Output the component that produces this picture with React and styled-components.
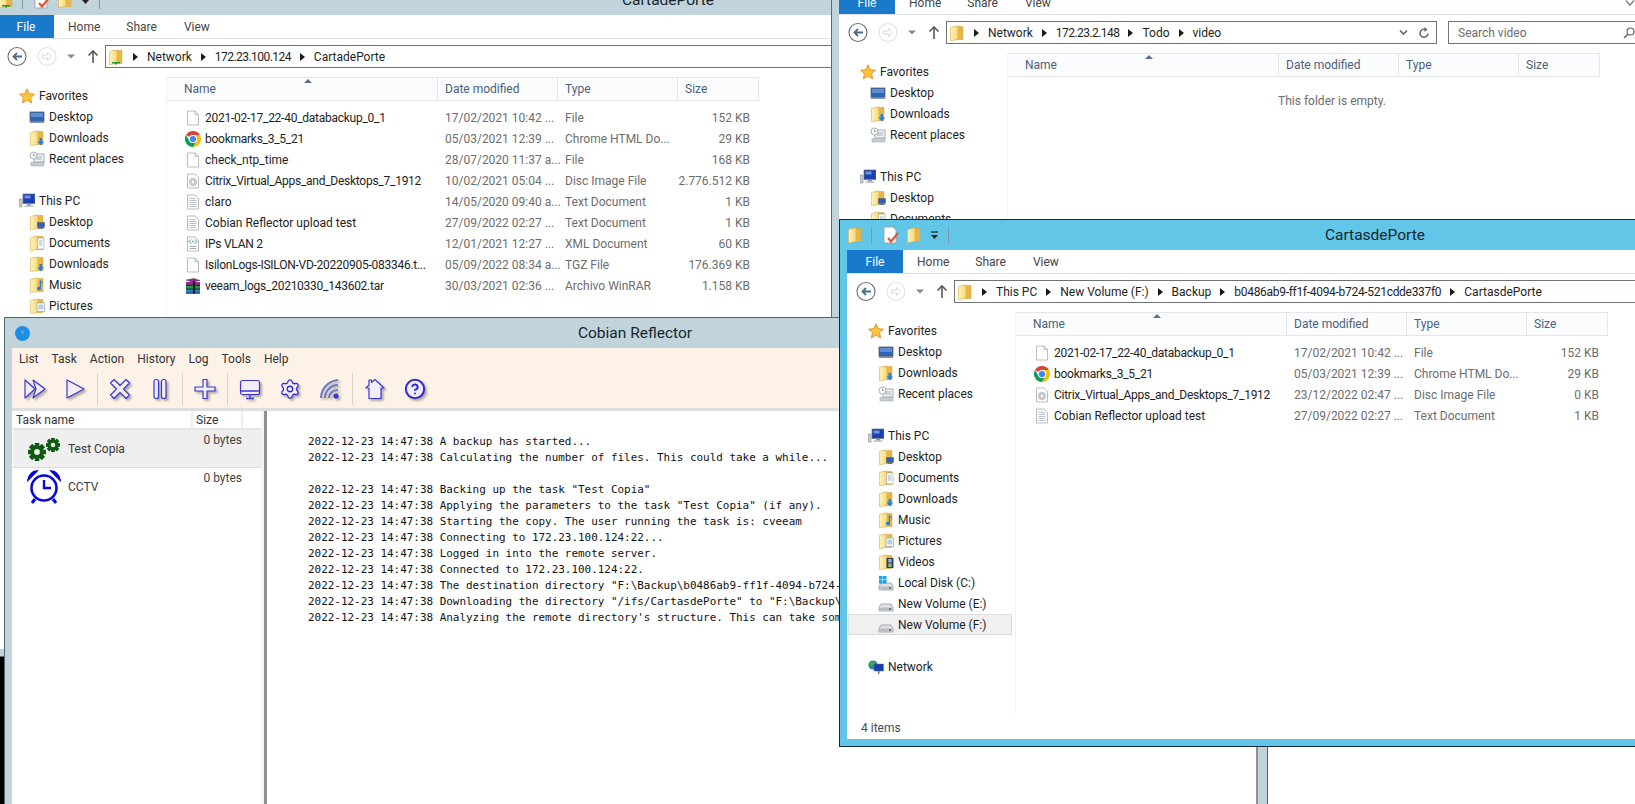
import React from "react"
import styled, { createGlobalStyle } from "styled-components"
import { Settings, CircleHelp } from "lucide-react"

const UI = `Roboto, "Liberation Sans", sans-serif`

const Global = createGlobalStyle`
  html, body { margin: 0; padding: 0; background: #000; }
  body { font-family: ${UI}; font-size: 12px; }
`

const Screen = styled.div`
  position: relative;
  width: 1635px;
  height: 804px;
  overflow: hidden;
  background: #000;
`

/* ---------- explorer window ---------- */

const Win = styled.section`
  position: absolute;
  left: ${p => p.$left}px;
  top: ${p => p.$top}px;
  width: ${p => p.$width}px;
  height: ${p => p.$height}px;
  z-index: ${p => p.$z};
  box-sizing: border-box;
  display: flex;
  flex-direction: column;
  border: 1px solid ${p => (p.$active ? "#16233a" : "#5c6b75")};
  background: ${p => (p.$active ? "#62c6e8" : "#c1d4dc")};
  padding: 0 7px 7px;
`

const TitleBar = styled.header`
  flex: none;
  height: 30px;
  display: grid;
  grid-template-columns: 1fr auto 1fr;
  align-items: center;
`

const Title = styled.h1`
  margin: 0;
  font-size: 15.5px;
  font-weight: 400;
  color: #16262f;
`

const Quick = styled.div`
  display: flex;
  align-items: center;
  height: 100%;
`

const QuickSep = styled.span`
  width: 1px;
  height: 17px;
  background: #7d9aa8;
  margin: ${p => p.$margin};
`

const QuickGap = styled.span`
  width: ${p => p.$w}px;
`

const Body = styled.div`
  flex: 1;
  min-height: 0;
  background: #fff;
  display: flex;
  flex-direction: column;
`

const Tabs = styled.nav`
  flex: none;
  height: 23px;
  display: flex;
  align-items: center;
  border-bottom: 1px solid #dfe2e5;
`

const FileTab = styled.span`
  width: 56px;
  height: 100%;
  display: flex;
  align-items: center;
  justify-content: center;
  background: #1979ca;
  color: #fff;
`

const Tab = styled.span`
  color: #444;
  margin-left: ${p => p.$gap}px;
`

const HelpChevron = styled.svg`
  margin-left: auto;
  margin-right: 15px;
`

const AddressRow = styled.div`
  flex: none;
  height: 38px;
  display: flex;
  align-items: flex-start;
  padding: 6px 5px 0 9px;
  box-sizing: border-box;
`

const NavBtn = styled.svg`
  flex: none;
  height: 23px;
  margin-left: ${p => p.$gap || 0}px;
`

const Address = styled.div`
  flex: 1;
  min-width: 0;
  height: 23px;
  box-sizing: border-box;
  margin-left: 6px;
  border: 1px solid #6f7275;
  display: flex;
  align-items: center;
  padding: 0 4px 0 2px;
  color: #1e1e1e;
  white-space: nowrap;
`

const Crumb = styled.span`
  display: flex;
  align-items: center;
  letter-spacing: ${p => p.$tight}px;
`

const CrumbArrow = styled.i`
  width: 0;
  height: 0;
  margin: 0 9px;
  border-style: solid;
  border-width: 4px 0 4px 5px;
  border-color: transparent transparent transparent #1a1a1a;
`

const AddressTools = styled.span`
  margin-left: auto;
  display: flex;
  align-items: center;
  gap: 10px;
  padding-right: 2px;
`

const Search = styled.div`
  flex: none;
  width: 197px;
  height: 23px;
  box-sizing: border-box;
  margin-left: 11px;
  border: 1px solid #6f7275;
  padding: 0 9px;
  display: flex;
  align-items: center;
  justify-content: space-between;
  color: #6d6d6d;
`

const Main = styled.div`
  flex: 1;
  min-height: 0;
  display: flex;
`

const Side = styled.aside`
  flex: none;
  width: 169px;
  box-sizing: border-box;
  padding-top: 8px;
  border-right: 1px solid #f3f3f3;
`

const SideRow = styled.div`
  height: 21px;
  box-sizing: border-box;
  display: flex;
  align-items: center;
  gap: 4px;
  color: #1e1e1e;
  margin: 0 3px 0 1px;
  padding-left: ${p => (p.$sub ? 30 : 20)}px;
  background: ${p => (p.$selected ? "#f0f0f0" : "transparent")};
  outline: ${p => (p.$selected ? "1px solid #dcdcdc" : "none")};
  outline-offset: -1px;
`

const SideGap = styled.div`
  height: 21px;
`

const Files = styled.div`
  flex: 1;
  min-width: 0;
`

const COLS = "271px 120px 120px 81px"

const HeaderRow = styled.div`
  width: 592px;
  height: 24px;
  box-sizing: border-box;
  display: grid;
  grid-template-columns: ${COLS};
  background: #fbfcfd;
  border: solid #e4e7ea;
  border-width: 1px 1px 1px 0;
  color: #4c607a;
`

const HeaderCell = styled.div`
  position: relative;
  display: flex;
  align-items: center;
  padding-left: ${p => (p.$first ? 17 : 7)}px;
  border-right: ${p => (p.$last ? "none" : "1px solid #e4e7ea")};

  &::before {
    content: "";
    display: ${p => (p.$first ? "block" : "none")};
    position: absolute;
    top: 1px;
    left: 137px;
    border-style: solid;
    border-width: 0 4px 4px;
    border-color: transparent transparent #5d7288;
  }
`

const FileList = styled.div`
  padding-top: 6px;
`

const FileRow = styled.div`
  width: 592px;
  height: 21px;
  display: grid;
  grid-template-columns: ${COLS};
  align-items: center;
  color: #6d6d6d;
`

const FileName = styled.div`
  display: flex;
  align-items: center;
  gap: 4px;
  padding-left: 18px;
  color: #1e1e1e;
  white-space: nowrap;
  letter-spacing: ${p => (p.$digits ? "-0.26px" : "0")};
`

const FileCell = styled.div`
  padding-left: 7px;
  white-space: nowrap;
`

const FileSize = styled.div`
  text-align: right;
  padding-right: 9px;
  white-space: nowrap;
`

const Empty = styled.p`
  margin: 0;
  padding: 16px 0 0 6px;
  text-align: center;
  color: #6d6d6d;
  line-height: 16px;
`

const Status = styled.footer`
  flex: none;
  height: 26px;
  box-sizing: border-box;
  display: flex;
  align-items: center;
  padding: 4px 0 0 14px;
  color: #3d4d63;
`

/* ---------- cobian window ---------- */

const CobianWin = styled.section`
  position: absolute;
  left: 4px;
  top: 317px;
  width: 1264px;
  height: 600px;
  z-index: 3;
  box-sizing: border-box;
  display: flex;
  flex-direction: column;
  border: 1px solid #55636b;
  background: #c1d4dc;
  padding: 0 9px 7px 7px;
`

const CobianDisc = styled.span`
  width: 15px;
  height: 15px;
  margin-left: 3px;
  border-radius: 50%;
  background: radial-gradient(circle at 50% 40%, #7f9fb8 0 1.2px, #1b8fe6 2px);
`

const MenuArea = styled.div`
  flex: none;
  background: #fcf2e7;
`

const Menu = styled.nav`
  height: 21px;
  display: flex;
  align-items: center;
  gap: 13px;
  padding-left: 7px;
  color: #333;
`

const Toolbar = styled.div`
  height: 39px;
  display: flex;
  align-items: center;
  padding-left: 3px;
`

const ToolBtn = styled.span`
  width: 40px;
  display: flex;
  justify-content: center;

  svg {
    filter: drop-shadow(2px 2px 1px rgba(70, 60, 60, 0.4));
  }
`

const ToolSep = styled.span`
  width: 1px;
  height: 32px;
  margin: 0 2px;
  background: #d9d2ca;
`

const Panes = styled.div`
  flex: 1;
  min-height: 0;
  display: flex;
  background: #fff;
  border-top: 3px solid #dedede;
`

const TaskPane = styled.div`
  flex: none;
  width: 248px;
  margin-left: 1px;
`

const TASK_COLS = "180px 50px 18px"

const TaskHeader = styled.div`
  height: 17px;
  display: grid;
  grid-template-columns: ${TASK_COLS};
  border-bottom: 2px solid #e4e4e4;
  color: #333;
`

const TaskHeadCell = styled.div`
  display: flex;
  align-items: center;
  padding-left: 3px;
  border-right: 2px solid #eeeeee;
`

const TaskRow = styled.div`
  height: 38px;
  box-sizing: border-box;
  display: grid;
  grid-template-columns: ${TASK_COLS};
  background: ${p => (p.$selected ? "#efefef" : "#fff")};
  border-bottom: ${p => (p.$selected ? "1px solid #dcdcdc" : "none")};
`

const TaskName = styled.div`
  display: flex;
  align-items: center;
  gap: 7px;
  padding-left: 14px;
  color: #3a3a3a;
`

const TaskSize = styled.div`
  padding-top: 2px;
  line-height: 16px;
  text-align: right;
  padding-right: 1px;
  color: #444;
  white-space: nowrap;
`

const Splitter = styled.div`
  flex: none;
  width: 3px;
  background: #f4f4f4;
`

const LogPane = styled.pre`
  flex: 1;
  min-width: 0;
  margin: 0;
  overflow: hidden;
  border-left: 3px solid #8e9296;
  border-right: 2px solid #8e9296;
  padding: 23px 0 0 41px;
  font-family: "DejaVu Sans Mono", "Liberation Mono", monospace;
  font-size: 10.95px;
  line-height: 16px;
  color: #111;
  background: #fff;
`

/* ---------- icons ---------- */

const Svg = ({ children, w = 16, h = 16, ...rest }) => (
  <svg width={w} height={h} viewBox={`0 0 ${w} ${h}`} style={{ flex: "none" }} {...rest}>{children}</svg>
)

const FolderShape = () => (
  <>
    <defs>
      <linearGradient id="folderFace" x1="0" x2="1" y1="0" y2="0">
        <stop offset="0" stopColor="#fff4bd" />
        <stop offset="1" stopColor="#f6d777" />
      </linearGradient>
    </defs>
    <path d="M5 1.5h9v13H5z" fill="#e6b646" stroke="#cfa03a" strokeWidth=".5" />
    <path d="M1.5 2.5 9 .8v13.6L1.5 15.8z" fill="url(#folderFace)" stroke="#d8b04c" strokeWidth=".6" />
  </>
)

const Overlays = {
  down: <path d="M10.5 8h2.6v3.5h2L11.8 15.5 8.5 11.5h2z" fill="#2a7fd6" />,
  desktop: (
    <>
      <rect x="8.5" y="8.5" width="7" height="5" fill="#2f62b8" stroke="#555" strokeWidth=".5" />
      <rect x="9.5" y="14" width="5" height="1" fill="#777" />
    </>
  ),
  doc: (
    <>
      <rect x="8.5" y="3" width="6.5" height="11" fill="#fff" stroke="#9a9a9a" strokeWidth=".6" />
      <path d="M10 6h3.5M10 8h3.5M10 10h3.5" stroke="#7a8aa0" strokeWidth=".7" />
    </>
  ),
  music: <path d="M12 4v7.5a2 1.8 0 1 1-1.2-1.6V3c2 1 3.5 2.6 3.7 5-.7-1.6-1.4-2.2-2.5-2.7z" fill="#2a7fd6" />,
  pic: (
    <>
      <rect x="8" y="5" width="7.5" height="8.5" fill="#fff" stroke="#8fa4b4" strokeWidth=".7" />
      <rect x="9.3" y="6.5" width="5" height="5" fill="#b9d0e2" />
    </>
  ),
  video: (
    <>
      <rect x="8.5" y="4" width="7" height="10" fill="#33404c" />
      <rect x="10.3" y="5" width="3.4" height="3.5" fill="#8fb7d8" />
      <rect x="10.3" y="9.5" width="3.4" height="3.5" fill="#7fbf8f" />
    </>
  ),
  net: <path d="M4 13h8v1.5H9v1H7v-1H4z" fill="#1f9d3a" />,
}

const Folder = ({ over }) => (
  <Svg>
    <FolderShape />
    {over && Overlays[over]}
  </Svg>
)

const MonitorIcon = () => (
  <Svg>
    <rect x="1" y="3" width="14" height="9.5" fill="#2e63b6" stroke="#5a6470" strokeWidth=".8" />
    <rect x="2" y="4" width="12" height="4" fill="#5e8fd2" />
    <rect x="1" y="12.5" width="14" height="1.5" fill="#8d949c" />
  </Svg>
)

const RecentIcon = () => (
  <Svg>
    <rect x="5" y="3" width="10" height="8" fill="#eef2f5" stroke="#8c99a3" strokeWidth=".8" />
    <circle cx="4.5" cy="4.5" r="3.5" fill="#fff" stroke="#8c99a3" strokeWidth=".8" />
    <path d="M4.5 2.5v2h1.6" stroke="#667" strokeWidth=".7" fill="none" />
    <path d="M7 6h6M7 8h6" stroke="#94a3ae" strokeWidth=".8" />
    <rect x="2" y="11.5" width="13" height="3.5" fill="#c6ccd1" stroke="#9aa2a9" strokeWidth=".5" />
  </Svg>
)

const PcIcon = () => (
  <Svg>
    <rect x="0.5" y="6" width="2.5" height="8" fill="#c9ced3" stroke="#7b8288" strokeWidth=".5" />
    <rect x="4" y="1" width="12" height="9.5" fill="#1a3fb4" stroke="#6d747b" strokeWidth=".7" />
    <rect x="5.5" y="2.5" width="6" height="3" fill="#6f93e0" />
    <rect x="8" y="10.5" width="4" height="2" fill="#8d949c" />
    <rect x="5.5" y="12.5" width="9" height="1.2" fill="#a9afb5" />
  </Svg>
)

const StarIcon = () => (
  <Svg>
    <path d="M8 .8l2.2 4.8 5.3.6-3.9 3.6 1.1 5.2L8 12.3 3.3 15l1.1-5.2L.5 6.2l5.3-.6z" fill="#f7c23c" stroke="#e08a26" strokeWidth=".8" />
  </Svg>
)

const DiskShape = () => (
  <>
    <path d="M1 11.5 3 8h10l2 3.5V15H1z" fill="#dfe2e5" stroke="#8a8f95" strokeWidth=".7" />
    <rect x="1.5" y="11.5" width="13" height="3" fill="#b9bec3" />
    <rect x="11" y="12.3" width="2" height="1.4" fill="#555" />
  </>
)

const DiskIcon = () => (
  <Svg>
    <DiskShape />
  </Svg>
)

const SysDiskIcon = () => (
  <Svg>
    <DiskShape />
    <path d="M1 1h3.5v3.5H1zM5 1h3.5v3.5H5zM1 5h3.5v3.5H1zM5 5h3.5v3.5H5z" fill="#19a5e6" />
  </Svg>
)

const NetIcon = () => (
  <Svg>
    <circle cx="5" cy="6" r="4.6" fill="#1f8f8f" />
    <path d="M2 4c2-1 4-1 5 0-1 2-3 3-5 2z" fill="#47b04b" />
    <rect x="6" y="5" width="9.5" height="7" fill="#1a3fb4" stroke="#666" strokeWidth=".5" />
    <rect x="10" y="12" width="1.5" height="3" fill="#777" />
  </Svg>
)

const PagePath = "M2.5 1h7.5l3.5 3.5V15h-11z"

const FileIcon = () => (
  <Svg>
    <path d={PagePath} fill="#fff" stroke="#a9a9a9" strokeWidth=".8" />
    <path d="M10 1v3.5h3.5" fill="none" stroke="#a9a9a9" strokeWidth=".8" />
  </Svg>
)

const TextIcon = () => (
  <Svg>
    <path d={PagePath} fill="#fff" stroke="#a9a9a9" strokeWidth=".8" />
    <path d="M4.5 4.5h6M4.5 6.5h7M4.5 8.5h7M4.5 10.5h7M4.5 12.5h7" stroke="#a8b4c2" strokeWidth=".8" />
  </Svg>
)

const DiscIcon = () => (
  <Svg>
    <path d={PagePath} fill="#fff" stroke="#a9a9a9" strokeWidth=".8" />
    <circle cx="8" cy="9" r="4.2" fill="#c7c9cc" />
    <circle cx="8" cy="9" r="1.2" fill="#fff" />
  </Svg>
)

const XmlIcon = () => (
  <Svg>
    <path d={PagePath} fill="#fff" stroke="#a9a9a9" strokeWidth=".8" />
    <path d="M6 3.5 4 5.5l2 2M10 3.5l2 2-2 2" fill="none" stroke="#2c8a5c" strokeWidth="1" />
    <circle cx="8" cy="5.5" r="1" fill="#49a3d8" />
    <path d="M4.5 10.5h7M4.5 12.5h7" stroke="#8a94a0" strokeWidth=".8" />
  </Svg>
)

const ChromeIcon = () => (
  <Svg>
    <path d="M1.07 4A8 8 0 0 1 14.93 4H8a4 4 0 0 0-3.46 2z" fill="#db4437" />
    <path d="M14.93 4A8 8 0 0 1 8 16l3.46-6A4 4 0 0 0 8 4z" fill="#f4c20d" />
    <path d="M8 16A8 8 0 0 1 1.07 4l3.47 6a4 4 0 0 0 6.92 0z" fill="#0f9d58" />
    <circle cx="8" cy="8" r="4" fill="#fff" />
    <circle cx="8" cy="8" r="3.1" fill="#4285f4" />
  </Svg>
)

const RarIcon = () => (
  <Svg>
    <path d="M1 2 9 .5l6 2-8 1.5z" fill="#8e2c8e" stroke="#222" strokeWidth=".4" />
    <rect x="1" y="4" width="14" height="3.4" fill="#8e2c8e" />
    <rect x="1" y="7.5" width="14" height="3.6" fill="#1f9c4a" />
    <rect x="1" y="11.2" width="14" height="3.8" fill="#2b7fc4" />
    <path d="M1 7.4h14M1 11.1h14M1 15.2h14" stroke="#111" strokeWidth=".9" />
    <rect x="8" y="3" width="2" height="12.5" fill="#1c1c1c" />
  </Svg>
)

const CheckDoc = () => (
  <Svg w={18} h={18}>
    <path d="M2 1h9l3 3v13H2z" fill="#fff" stroke="#9a9a9a" strokeWidth=".8" />
    <path d="M6 12l3 3.5L16 7" fill="none" stroke="#e2543a" strokeWidth="2.2" />
  </Svg>
)

const DownMini = () => (
  <Svg w={9} h={9}>
    <path d="M1 1h7" stroke="#222" strokeWidth="1.2" />
    <path d="M1 4h7L4.5 8z" fill="#222" />
  </Svg>
)

const BackBtn = ({ dim, gap }) => (
  <NavBtn width="20" height="23" viewBox="0 0 20 23" $gap={gap}>
    <circle cx="10" cy="11.5" r="9" fill="#fff" stroke={dim ? "#e0e0e0" : "#6a6a6a"} strokeWidth="1.1" />
    {dim
      ? <path d="M5.5 10h5V7.5l4 4-4 4V13h-5z" fill="none" stroke="#dadada" />
      : <path d="M15 11.5H6.5M10 8l-3.5 3.5L10 15" fill="none" stroke="#4d6a86" strokeWidth="1.8" />}
  </NavBtn>
)

const GearDots = ({ cx, cy, r, fill }) => (
  <g fill={fill}>
    {[0, 45, 90, 135, 180, 225, 270, 315].map(a => (
      <rect key={a} x={cx - r * 0.24} y={cy - r} width={r * 0.48} height={r * 2} transform={`rotate(${a} ${cx} ${cy})`} />
    ))}
    <circle cx={cx} cy={cy} r={r * 0.74} />
    <circle cx={cx} cy={cy} r={r * 0.32} fill="#efefef" />
  </g>
)

const GearsIcon = () => (
  <Svg w={34} h={24}>
    <GearDots cx={10} cy={15} r={9} fill="#0e5b12" />
    <GearDots cx={26} cy={8} r={7} fill="#0e5b12" />
  </Svg>
)

const ClockIcon = () => (
  <Svg w={34} h={34}>
    <circle cx="17" cy="18" r="12.5" fill="#fff" stroke="#0808dc" strokeWidth="2.6" />
    <path d="M17 10v8h7" fill="none" stroke="#0808dc" strokeWidth="2.4" />
    <path d="M1 10C2 4 6 1 10 1L1 10zM33 10C32 4 28 1 24 1l9 9z" fill="#0808dc" stroke="#0808dc" strokeWidth="1.6" />
    <path d="M8 29l-3 4M26 29l3 4" stroke="#0808dc" strokeWidth="3" />
  </Svg>
)

const ink = { stroke: "#3c38d2", strokeWidth: 1.2, fill: "#f4eefa", strokeLinejoin: "round" }

const Tool = ({ children }) => (
  <ToolBtn>
    <svg width="24" height="24" viewBox="0 0 24 24">{children}</svg>
  </ToolBtn>
)

const LucideTool = ({ as: Icon, weight = 1.4 }) => (
  <ToolBtn>
    <Icon size={22} color="#2f2bd0" strokeWidth={weight} fill="#f4eefa" />
  </ToolBtn>
)

/* ---------- data ---------- */

const favorites = [
  ["Desktop", <MonitorIcon />],
  ["Downloads", <Folder over="down" />],
  ["Recent places", <RecentIcon />],
]

const libraries = [
  ["Desktop", <Folder over="desktop" />],
  ["Documents", <Folder over="doc" />],
  ["Downloads", <Folder over="down" />],
  ["Music", <Folder over="music" />],
  ["Pictures", <Folder over="pic" />],
  ["Videos", <Folder over="video" />],
  ["Local Disk (C:)", <SysDiskIcon />],
  ["New Volume (E:)", <DiskIcon />],
  ["New Volume (F:)", <DiskIcon />],
]

const networkFiles = [
  ["2021-02-17_22-40_databackup_0_1", <FileIcon />, "17/02/2021 10:42 ...", "File", "152 KB"],
  ["bookmarks_3_5_21", <ChromeIcon />, "05/03/2021 12:39 ...", "Chrome HTML Do...", "29 KB"],
  ["check_ntp_time", <FileIcon />, "28/07/2020 11:37 a...", "File", "168 KB"],
  ["Citrix_Virtual_Apps_and_Desktops_7_1912", <DiscIcon />, "10/02/2021 05:04 ...", "Disc Image File", "2.776.512 KB"],
  ["claro", <TextIcon />, "14/05/2020 09:40 a...", "Text Document", "1 KB"],
  ["Cobian Reflector upload test", <TextIcon />, "27/09/2022 02:27 ...", "Text Document", "1 KB"],
  ["IPs VLAN 2", <XmlIcon />, "12/01/2021 12:27 ...", "XML Document", "60 KB"],
  ["IsilonLogs-ISILON-VD-20220905-083346.t...", <FileIcon />, "05/09/2022 08:34 a...", "TGZ File", "176.369 KB"],
  ["veeam_logs_20210330_143602.tar", <RarIcon />, "30/03/2021 02:36 ...", "Archivo WinRAR", "1.158 KB"],
]

const localFiles = [
  ["2021-02-17_22-40_databackup_0_1", <FileIcon />, "17/02/2021 10:42 ...", "File", "152 KB"],
  ["bookmarks_3_5_21", <ChromeIcon />, "05/03/2021 12:39 ...", "Chrome HTML Do...", "29 KB"],
  ["Citrix_Virtual_Apps_and_Desktops_7_1912", <DiscIcon />, "23/12/2022 02:47 ...", "Disc Image File", "0 KB"],
  ["Cobian Reflector upload test", <TextIcon />, "27/09/2022 02:27 ...", "Text Document", "1 KB"],
]

const stamp = "2022-12-23 14:47:38 "
const logLines = [
  "A backup has started...",
  "Calculating the number of files. This could take a while...",
  null,
  'Backing up the task "Test Copia"',
  'Applying the parameters to the task "Test Copia" (if any).',
  "Starting the copy. The user running the task is: cveeam",
  "Connecting to 172.23.100.124:22...",
  "Logged in into the remote server.",
  "Connected to 172.23.100.124:22.",
  'The destination directory "F:\\Backup\\b0486ab9-ff1f-4094-b724-521cdde337f0\\CartasdePorte" has been created.',
  'Downloading the directory "/ifs/CartasdePorte" to "F:\\Backup\\b0486ab9-ff1f-4094-b724-521cdde337f0\\CartasdePorte"',
  "Analyzing the remote directory's structure. This can take some time.",
]

// ip addresses and guids run wider in Roboto than in the original font
const crumbTight = c => (/^[\d.]+$/.test(c) ? -0.55 : /\d/.test(c) ? -0.3 : 0)

/* ---------- pieces ---------- */

const Explorer = ({ title, crumbs, shared, active, files, statusText, selected, searchIn, ...place }) => (
  <Win {...place} $active={active}>
    <TitleBar>
      <Quick>
        <Folder over={shared ? "net" : undefined} />
        <QuickSep $margin="0 10px 0 8px" />
        <CheckDoc />
        <QuickGap $w={6} />
        <Folder />
        <QuickGap $w={8} />
        <DownMini />
        <QuickSep $margin="0 0 0 9px" />
      </Quick>
      <Title>{title}</Title>
      <span />
    </TitleBar>
    <Body>
      <Tabs>
        <FileTab>File</FileTab>
        <Tab $gap={14}>Home</Tab>
        <Tab $gap={26}>Share</Tab>
        <Tab $gap={27}>View</Tab>
        <HelpChevron width="10" height="8" viewBox="0 0 10 8">
          <path d="M1 1.5 5 6l4-4.5" fill="none" stroke="#8a8a8a" strokeWidth="1.6" />
        </HelpChevron>
      </Tabs>
      <AddressRow>
        <BackBtn />
        <BackBtn dim gap={10} />
        <NavBtn width="8" height="23" viewBox="0 0 8 23" $gap={10}>
          <path d="M0 9.5h8l-4 4z" fill="#8a8a8a" />
        </NavBtn>
        <NavBtn width="12" height="23" viewBox="0 0 12 23" $gap={12}>
          <path d="M6 18V6M1.5 10.5 6 6l4.5 4.5" fill="none" stroke="#5a5a5a" strokeWidth="1.6" />
        </NavBtn>
        <Address>
          <Folder over={shared ? "net" : undefined} />
          {crumbs.map(c => (
            <Crumb key={c} $tight={crumbTight(c)}>
              <CrumbArrow />
              {c}
            </Crumb>
          ))}
          <AddressTools>
            <svg width="9" height="7" viewBox="0 0 9 7">
              <path d="M1 1.5 4.5 5 8 1.5" fill="none" stroke="#666" strokeWidth="1.6" />
            </svg>
            <svg width="12" height="12" viewBox="0 0 12 12">
              <path d="M10 6.5A4 4 0 1 1 7.5 2.5" fill="none" stroke="#666" strokeWidth="1.5" />
              <path d="M6.5 0v5l3-2.5z" fill="#666" />
            </svg>
          </AddressTools>
        </Address>
        <Search>
          Search {searchIn}
          <svg width="12" height="12" viewBox="0 0 12 12">
            <circle cx="7.5" cy="4.5" r="3.5" fill="none" stroke="#666" strokeWidth="1.2" />
            <path d="M5 7l-4 4" stroke="#666" strokeWidth="1.6" />
          </svg>
        </Search>
      </AddressRow>
      <Main>
        <Side>
          <SideRow><StarIcon />Favorites</SideRow>
          {favorites.map(([name, icon]) => (
            <SideRow $sub key={name}>{icon}{name}</SideRow>
          ))}
          <SideGap />
          <SideRow><PcIcon />This PC</SideRow>
          {libraries.map(([name, icon]) => (
            <SideRow $sub key={name} $selected={selected === name}>{icon}{name}</SideRow>
          ))}
          <SideGap />
          <SideRow><NetIcon />Network</SideRow>
        </Side>
        <Files>
          <HeaderRow>
            <HeaderCell $first>Name</HeaderCell>
            <HeaderCell>Date modified</HeaderCell>
            <HeaderCell>Type</HeaderCell>
            <HeaderCell $last>Size</HeaderCell>
          </HeaderRow>
          {files.length === 0 && <Empty>This folder is empty.</Empty>}
          <FileList>
            {files.map(([name, icon, date, type, size]) => (
              <FileRow key={name}>
                <FileName $digits={/\d/.test(name)}>{icon}{name}</FileName>
                <FileCell>{date}</FileCell>
                <FileCell>{type}</FileCell>
                <FileSize>{size}</FileSize>
              </FileRow>
            ))}
          </FileList>
        </Files>
      </Main>
      <Status>{statusText}</Status>
    </Body>
  </Win>
)

const Cobian = () => (
  <CobianWin>
    <TitleBar>
      <Quick><CobianDisc /></Quick>
      <Title>Cobian Reflector</Title>
      <span />
    </TitleBar>
    <MenuArea>
      <Menu>
        {["List", "Task", "Action", "History", "Log", "Tools", "Help"].map(m => <span key={m}>{m}</span>)}
      </Menu>
      <Toolbar>
        <Tool>
          <path d="M2 3v18l10-9z" {...ink} />
          <path d="M10 3l12 9-12 9 3-9z" {...ink} />
        </Tool>
        <Tool><path d="M4 3v18l17-9z" {...ink} /></Tool>
        <ToolSep />
        <Tool><path d="M6 2.5l6 6 6-6 3.5 3.5-6 6 6 6-3.5 3.5-6-6-6 6L2.5 18l6-6-6-6z" {...ink} /></Tool>
        <Tool>
          <rect x="6" y="2.5" width="4.5" height="19" rx="2" {...ink} />
          <rect x="13.5" y="2.5" width="4.5" height="19" rx="2" {...ink} />
        </Tool>
        <ToolSep />
        <Tool><path d="M10 2.5h4v7.5h8v4h-8v7.5h-4V14H2v-4h8z" {...ink} /></Tool>
        <ToolSep />
        <Tool>
          <rect x="2.5" y="3.5" width="19" height="14" rx="2" {...ink} />
          <path d="M3 14h18M12 18v3M8 21.5h8" fill="none" stroke="#3c38d2" strokeWidth="1.3" />
        </Tool>
        <LucideTool as={Settings} />
        <Tool>
          <path d="M3 21C3 12 10 4 20 3M7 21c0-7 6-13 13-13M11 21c0-4 4-8 9-8" fill="none" stroke="#6a78c8" strokeWidth="2" />
          <circle cx="18" cy="19" r="2.6" fill="#3c38d2" />
        </Tool>
        <ToolSep />
        <Tool><path d="M12 2.5 21 11h-3v10.5H6V11H3l3-3V3h2.5v2.6z" {...ink} /></Tool>
        <LucideTool as={CircleHelp} weight={2.2} />
      </Toolbar>
    </MenuArea>
    <Panes>
      <TaskPane>
        <TaskHeader>
          <TaskHeadCell>Task name</TaskHeadCell>
          <TaskHeadCell>Size</TaskHeadCell>
          <span />
        </TaskHeader>
        <TaskRow $selected>
          <TaskName><GearsIcon />Test Copia</TaskName>
          <TaskSize>0 bytes</TaskSize>
        </TaskRow>
        <TaskRow>
          <TaskName><ClockIcon />CCTV</TaskName>
          <TaskSize>0 bytes</TaskSize>
        </TaskRow>
      </TaskPane>
      <Splitter />
      <LogPane>
        {logLines.map(l => (l ? stamp + l : "")).join("\n")}
      </LogPane>
    </Panes>
  </CobianWin>
)

const App = () => (
  <Screen>
    <Global />
    <Explorer
      $left={-10} $top={-16} $width={1356} $height={673} $z={1}
      title="CartadePorte" shared searchIn="CartadePorte"
      crumbs={["Network", "172.23.100.124", "CartadePorte"]}
      files={networkFiles}
      statusText="9 items"
    />
    <Explorer
      $left={831} $top={-40} $width={827} $height={900} $z={2}
      title="video" searchIn="video"
      crumbs={["Network", "172.23.2.148", "Todo", "video"]}
      files={[]}
      statusText="0 items"
    />
    <Cobian />
    <Explorer
      $left={839} $top={219} $width={1072} $height={528} $z={4} active
      title="CartasdePorte" searchIn="CartasdePorte"
      crumbs={["This PC", "New Volume (F:)", "Backup", "b0486ab9-ff1f-4094-b724-521cdde337f0", "CartasdePorte"]}
      files={localFiles}
      statusText="4 items"
      selected="New Volume (F:)"
    />
  </Screen>
)

export default App
